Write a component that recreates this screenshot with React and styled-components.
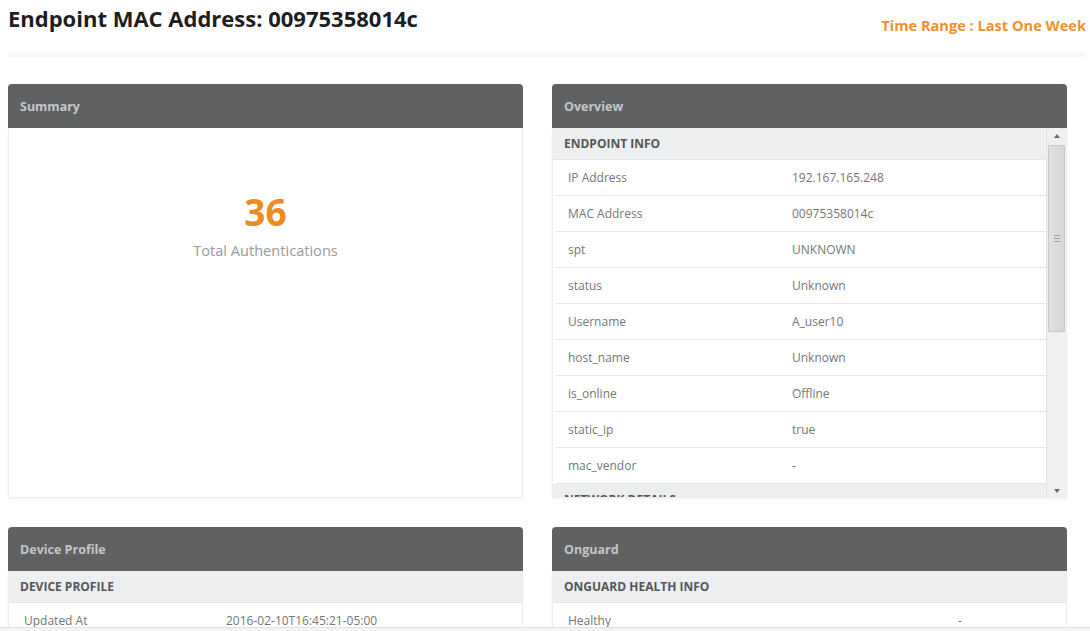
import React from "react";
import styled, { createGlobalStyle } from "styled-components";

const GlobalStyle = createGlobalStyle`
  html, body {
    margin: 0;
    padding: 0;
    background: #ffffff;
    font-family: "Open Sans", "Noto Sans", Arial, sans-serif;
    color: #555;
  }
  * { box-sizing: border-box; }
`;

const Page = styled.div`
  padding: 0 4px 0 8px;
`;

const TopBar = styled.header`
  display: flex;
  justify-content: space-between;
  align-items: flex-start;
  height: 57px;
  border-bottom: 5px solid #f8f8f8;
`;

const Title = styled.h1`
  margin: 3px 0 0;
  font-size: 22px;
  line-height: 30px;
  font-weight: 700;
  color: #1e1e1e;
`;

const TimeRange = styled.div`
  margin-top: 15px;
  font-size: 14.6px;
  line-height: 20px;
  font-weight: 700;
  color: #f0912a;
`;

const Grid = styled.main`
  display: grid;
  grid-template-columns: 515px 515px;
  column-gap: 29px;
  row-gap: 29px;
  margin-top: 27px;
`;

const Panel = styled.section`
  display: flex;
  flex-direction: column;
`;

const PanelHeader = styled.div`
  height: 44px;
  display: flex;
  align-items: center;
  padding-left: 12px;
  background: #5f6163;
  border-radius: 4px 4px 0 0;
  color: #c4c6c8;
  font-size: 12.5px;
  font-weight: 700;
`;

const PanelBody = styled.div`
  height: ${(p) => p.$height}px;
  background: #fff;
  border: 1px solid #eeeeee;
  border-top: none;
  box-shadow: 0 1px 2px rgba(0, 0, 0, 0.06);
  display: flex;
  overflow: hidden;
`;

const StatBox = styled.div`
  flex: 1;
  display: flex;
  flex-direction: column;
  align-items: center;
  padding-top: 62px;
`;

const StatValue = styled.div`
  font-size: 37px;
  line-height: 44px;
  font-weight: 700;
  color: #ef8a1e;
`;

const StatLabel = styled.div`
  margin-top: 7px;
  font-size: 14.6px;
  line-height: 19px;
  color: #9a9a9a;
`;

const ScrollArea = styled.div`
  flex: 1;
  min-width: 0;
  overflow: hidden;
`;

const Band = styled.div`
  height: 32px;
  display: flex;
  align-items: center;
  padding-left: 11px;
  background: #eceef0;
  border-bottom: 1px solid #e4e6e8;
  font-size: 12px;
  font-weight: 700;
  color: #555759;
`;

const Row = styled.div`
  height: 36px;
  display: grid;
  grid-template-columns: ${(p) => p.$labelWidth}px 1fr;
  align-items: center;
  margin-left: 3px;
  padding-left: 12px;
  border-bottom: 1px solid #e7e7e7;
  font-size: 12px;
  color: #767676;
`;

const Cell = styled.span`
  white-space: nowrap;
`;

const Scrollbar = styled.div`
  width: 20px;
  display: flex;
  flex-direction: column;
  align-items: center;
  background: #eff0f1;
  border-left: 1px solid #e4e4e4;
  padding: 6px 1px 4px;
`;

const Arrow = styled.div`
  width: 0;
  height: 0;
  border-left: 3px solid transparent;
  border-right: 3px solid transparent;
  ${(p) =>
    p.$down
      ? "border-top: 4px solid #6a6a6a; margin-top: auto;"
      : "border-bottom: 4px solid #6a6a6a;"}
`;

const Thumb = styled.div`
  width: 17px;
  height: 187px;
  margin-top: 7px;
  background: linear-gradient(to right, #e2e2e2, #d6d6d6);
  border: 1px solid #c9c9c9;
  border-radius: 1px;
  display: flex;
  align-items: center;
  justify-content: center;
`;

const Grip = styled.div`
  width: 6px;
  height: 7px;
  border-top: 1px solid #a0a0a0;
  border-bottom: 1px solid #a0a0a0;
  position: relative;
  &::after {
    content: "";
    position: absolute;
    left: 0;
    right: 0;
    top: 2px;
    border-top: 1px solid #a0a0a0;
  }
`;

const Footer = styled.div`
  position: fixed;
  left: 0;
  right: 0;
  bottom: 0;
  height: 4px;
  background: #f3f3f3;
  border-top: 1px solid #e2e2e2;
`;

const endpointInfo = [
  ["IP Address", "192.167.165.248"],
  ["MAC Address", "00975358014c"],
  ["spt", "UNKNOWN"],
  ["status", "Unknown"],
  ["Username", "A_user10"],
  ["host_name", "Unknown"],
  ["is_online", "Offline"],
  ["static_ip", "true"],
  ["mac_vendor", "-"],
];

export default function App() {
  return (
    <Page>
      <GlobalStyle />
      <TopBar>
        <Title>Endpoint MAC Address: 00975358014c</Title>
        <TimeRange>Time Range : Last One Week</TimeRange>
      </TopBar>

      <Grid>
        <Panel>
          <PanelHeader>Summary</PanelHeader>
          <PanelBody $height={370}>
            <StatBox>
              <StatValue>36</StatValue>
              <StatLabel>Total Authentications</StatLabel>
            </StatBox>
          </PanelBody>
        </Panel>

        <Panel>
          <PanelHeader>Overview</PanelHeader>
          <PanelBody $height={370}>
            <ScrollArea>
              <Band>ENDPOINT INFO</Band>
              {endpointInfo.map(([k, v]) => (
                <Row key={k} $labelWidth={224}>
                  <Cell>{k}</Cell>
                  <Cell>{v}</Cell>
                </Row>
              ))}
              <Band>NETWORK DETAILS</Band>
            </ScrollArea>
            <Scrollbar>
              <Arrow />
              <Thumb>
                <Grip />
              </Thumb>
              <Arrow $down />
            </Scrollbar>
          </PanelBody>
        </Panel>

        <Panel>
          <PanelHeader>Device Profile</PanelHeader>
          <PanelBody $height={80}>
            <ScrollArea>
              <Band>DEVICE PROFILE</Band>
              <Row $labelWidth={202}>
                <Cell>Updated At</Cell>
                <Cell>2016-02-10T16:45:21-05:00</Cell>
              </Row>
            </ScrollArea>
          </PanelBody>
        </Panel>

        <Panel>
          <PanelHeader>Onguard</PanelHeader>
          <PanelBody $height={80}>
            <ScrollArea>
              <Band>ONGUARD HEALTH INFO</Band>
              <Row $labelWidth={390}>
                <Cell>Healthy</Cell>
                <Cell>-</Cell>
              </Row>
            </ScrollArea>
          </PanelBody>
        </Panel>
      </Grid>
      <Footer />
    </Page>
  );
}
